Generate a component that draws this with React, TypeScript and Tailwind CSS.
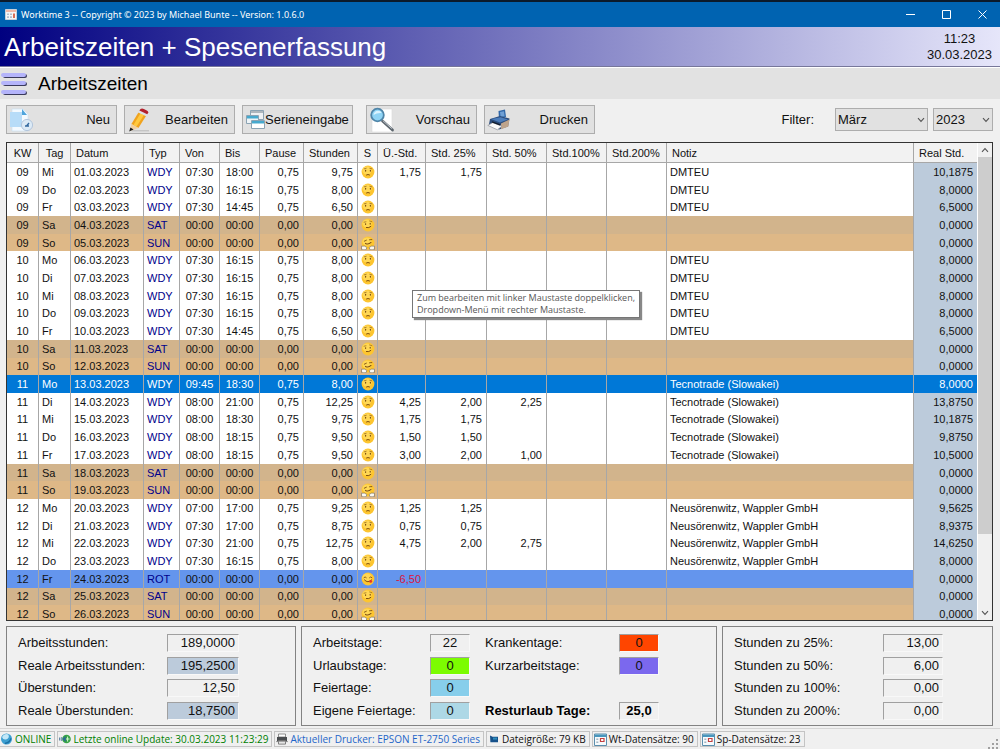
import React from "react";

interface Entry {
  kw: string;
  tag: string;
  datum: string;
  typ: "WDY" | "SAT" | "SUN" | "ROT";
  von: string;
  bis: string;
  pause: string;
  stunden: string;
  ueber?: string;
  std25?: string;
  std50?: string;
  notiz?: string;
  real: string;
  selected?: boolean;
}

const work = (
  kw: string,
  tag: string,
  day: string,
  von: string,
  bis: string,
  stunden: string,
  real: string,
  notiz: string,
  extra: Partial<Entry> = {}
): Entry => ({ kw, tag, datum: `${day}.03.2023`, typ: "WDY", von, bis, pause: "0,75", stunden, real, notiz, ...extra });

const free = (kw: string, tag: string, day: string, typ: Entry["typ"], extra: Partial<Entry> = {}): Entry => ({
  kw,
  tag,
  datum: `${day}.03.2023`,
  typ,
  von: "00:00",
  bis: "00:00",
  pause: "0,00",
  stunden: "0,00",
  real: "0,0000",
  ...extra,
});

const TEC = "Tecnotrade (Slowakei)";
const NEU = "Neusörenwitz, Wappler GmbH";

const entries: Entry[] = [
  work("09", "Mi", "01", "07:30", "18:00", "9,75", "10,1875", "DMTEU", { ueber: "1,75", std25: "1,75" }),
  work("09", "Do", "02", "07:30", "16:15", "8,00", "8,0000", "DMTEU"),
  work("09", "Fr", "03", "07:30", "14:45", "6,50", "6,5000", "DMTEU"),
  free("09", "Sa", "04", "SAT"),
  free("09", "So", "05", "SUN"),
  work("10", "Mo", "06", "07:30", "16:15", "8,00", "8,0000", "DMTEU"),
  work("10", "Di", "07", "07:30", "16:15", "8,00", "8,0000", "DMTEU"),
  work("10", "Mi", "08", "07:30", "16:15", "8,00", "8,0000", "DMTEU"),
  work("10", "Do", "09", "07:30", "16:15", "8,00", "8,0000", "DMTEU"),
  work("10", "Fr", "10", "07:30", "14:45", "6,50", "6,5000", "DMTEU"),
  free("10", "Sa", "11", "SAT"),
  free("10", "So", "12", "SUN"),
  work("11", "Mo", "13", "09:45", "18:30", "8,00", "8,0000", TEC, { selected: true }),
  work("11", "Di", "14", "08:00", "21:00", "12,25", "13,8750", TEC, { ueber: "4,25", std25: "2,00", std50: "2,25" }),
  work("11", "Mi", "15", "08:00", "18:30", "9,75", "10,1875", TEC, { ueber: "1,75", std25: "1,75" }),
  work("11", "Do", "16", "08:00", "18:15", "9,50", "9,8750", TEC, { ueber: "1,50", std25: "1,50" }),
  work("11", "Fr", "17", "08:00", "18:15", "9,50", "10,5000", TEC, { ueber: "3,00", std25: "2,00", std50: "1,00" }),
  free("11", "Sa", "18", "SAT"),
  free("11", "So", "19", "SUN"),
  work("12", "Mo", "20", "07:00", "17:00", "9,25", "9,5625", NEU, { ueber: "1,25", std25: "1,25" }),
  work("12", "Di", "21", "07:30", "17:00", "8,75", "8,9375", NEU, { ueber: "0,75", std25: "0,75" }),
  work("12", "Mi", "22", "07:30", "21:00", "12,75", "14,6250", NEU, { ueber: "4,75", std25: "2,00", std50: "2,75" }),
  work("12", "Do", "23", "07:30", "16:15", "8,00", "8,0000", NEU),
  free("12", "Fr", "24", "ROT", { ueber: "-6,50" }),
  free("12", "Sa", "25", "SAT"),
  free("12", "So", "26", "SUN"),
];

const rowColors = {
  WDY: "bg-white",
  SAT: "bg-[#d2b48c]",
  SUN: "bg-[#deb887]",
  ROT: "bg-[#6495ed]",
};

const columns = [
  { label: "KW", width: "w-8", align: "text-center" },
  { label: "Tag", width: "w-8", align: "text-center" },
  { label: "Datum", width: "w-[73px]", align: "text-left" },
  { label: "Typ", width: "w-9", align: "text-left" },
  { label: "Von", width: "w-10", align: "text-left" },
  { label: "Bis", width: "w-10", align: "text-left" },
  { label: "Pause", width: "w-11", align: "text-left" },
  { label: "Stunden", width: "w-[54px]", align: "text-left" },
  { label: "S", width: "w-5", align: "text-center" },
  { label: "Ü.-Std.", width: "w-12", align: "text-left" },
  { label: "Std. 25%", width: "w-[61px]", align: "text-left" },
  { label: "Std. 50%", width: "w-[60px]", align: "text-left" },
  { label: "Std.100%", width: "w-[60px]", align: "text-left" },
  { label: "Std.200%", width: "w-[60px]", align: "text-left" },
  { label: "Notiz", width: "", align: "text-left" },
  { label: "Real Std.", width: "w-[63px]", align: "text-left" },
];

const Face = ({ typ }: { typ: Entry["typ"] }) => (
  <svg viewBox="0 0 14 14" className="mx-auto block size-[14px]" aria-hidden="true">
    <circle cx="7" cy="7" r="6.4" fill="#fdc52f" />
    <ellipse cx="6" cy="5.4" rx="4.6" ry="4" fill="#ffd754" />
    {typ === "WDY" && (
      <g stroke="#7d4f12" strokeLinecap="round" fill="none">
        <path d="M3.2 3.8 5.2 3.3M8.8 3.3 10.8 3.8" strokeWidth=".6" />
        <path d="M4.6 5.3v.8M9.4 5.3v.8" strokeWidth="1.2" />
        <path d="M5.5 9.9Q7 8.9 8.5 9.9" strokeWidth="1" />
      </g>
    )}
    {typ === "SAT" && (
      <g stroke="#7d4f12" strokeLinecap="round" fill="none">
        <path d="M3 4.2 5 3.8M8.6 3 10.8 3.7" strokeWidth=".6" />
        <path d="M4.6 5.8v.5M9.2 5.4v.7" strokeWidth="1.2" />
        <path d="M5.4 9.6Q8 10.2 9.8 8.5" strokeWidth="1" />
      </g>
    )}
    {typ === "SUN" && (
      <g strokeLinecap="round" fill="none">
        <path d="M3.3 5.2 5.4 4.2M8.5 3.8 10.8 3.6" stroke="#7d4f12" strokeWidth=".9" />
        <path d="M4.5 7.4Q7.5 9 10 6.4" stroke="#7d4f12" strokeWidth="1.1" />
        <path d="M.6 10.2Q4 9.2 6 11.6L4.8 13.8H1.2ZM13.4 10.2Q10 9.2 8 11.6L9.2 13.8H12.8Z" fill="#fbf8f1" stroke="#6f685c" strokeWidth=".6" />
      </g>
    )}
    {typ === "ROT" && (
      <g strokeLinecap="round" fill="none">
        <path d="M2.9 5.6Q4.1 4 5.3 5.6M8.5 5.6Q9.7 4 10.9 5.6" stroke="#7d4f12" strokeWidth=".9" />
        <path d="M3.4 7.9Q7 11.8 10.4 7.9" stroke="#7d4f12" strokeWidth="1" />
        <ellipse cx="9.7" cy="9.4" rx="1.5" ry="1.3" fill="#e5322d" />
      </g>
    )}
  </svg>
);

const NewIcon = () => (
  <svg viewBox="0 0 24 24" className="size-6 shrink-0" aria-hidden="true">
    <path d="M3 1h11l5 5v17H3Z" fill="#f4faff" stroke="#c8dff2" strokeWidth=".6" />
    <path d="M1 4h12v15H1Z" fill="#b7dcf8" />
    <path d="M13 1v6h5Z" fill="#4ea4dc" />
    <circle cx="18" cy="17" r="5.6" fill="#dceaf6" stroke="#b3c6dc" />
    <path d="M16 18h4M17.5 18l2.5-3" stroke="#356aa0" strokeWidth="1.4" />
  </svg>
);

const PencilIcon = () => (
  <svg viewBox="0 0 24 24" className="size-6 shrink-0" aria-hidden="true">
    <path d="M5 22.8h17" stroke="#b9b9b9" />
    <path d="M11.4 4.4 19 8 11.4 20 4.4 16Z" fill="#f0a31f" />
    <path d="M13.4 5.4 17 7 9.4 18.8 6.3 17.2Z" fill="#ffc93f" />
    <path d="M4.4 16 11.4 20 3 23Z" fill="#f0cfa0" />
    <path d="m3.4 19.4 3.1 2-4.3 2Z" fill="#1c1c1c" />
    <path d="m11.4 4.4 1-2 7.8 3.8L19 8Z" fill="#dde1e4" />
    <path d="M12.4 2.4Q13.6-.2 16.8.9l3 1.5Q22.4 3.8 20.2 6.2Z" fill="#b3212c" />
  </svg>
);

const SeriesIcon = () => (
  <svg viewBox="0 0 20 21" className="h-[21px] w-5 shrink-0" aria-hidden="true">
    <g stroke="#8ba3b3">
      <path d="M5.5 1.5h13v9h-13Z" fill="#eef1f3" />
      <path d="M1.5 6.5h12v8h-12Z" fill="#eef4f7" />
      <path d="M6.5 11.5h13v8h-13Z" fill="#fff" />
    </g>
    <path d="M6 2h12v2H6Z" fill="#aeb6bc" />
    <path d="M2 7h11v2.4H2ZM7 12h12v2.6H7Z" fill="#46a9ce" />
  </svg>
);

const PreviewIcon = () => (
  <svg viewBox="0 0 26 26" className="size-[26px] shrink-0" aria-hidden="true">
    <path d="M3 2h20v23H3Z" fill="#fff" stroke="#d9d9d9" strokeWidth=".6" />
    <path d="m13.5 14 10 9" stroke="#5d666e" strokeWidth="2.8" strokeLinecap="round" />
    <path d="m13.8 13.6 9 8" stroke="#c3cad0" />
    <circle cx="8.5" cy="8" r="6.3" fill="#8fd4f5" stroke="#4f85a8" strokeWidth="1.8" />
    <path d="M4.5 8Q5 4 9 3.8q3 0 3.6 2.2Q8 5.6 4.5 8Z" fill="#d9f3ff" />
  </svg>
);

const PrinterIcon = () => (
  <svg viewBox="0 0 24 22" className="h-[22px] w-6 shrink-0" aria-hidden="true">
    <path d="m11.5 2 6.5-1.4L19 8l-7 2Z" fill="#2f66a8" />
    <path d="m13 3 4-.8.6 5-4 .8Z" fill="#6f9fd4" />
    <path d="M3 10 13 7l9.5 2.5-1.5 8-9 3-10-5Z" fill="#2b4c7c" />
    <path d="m4 10 9.5-1.8L21 10.4l-8 3Z" fill="#4c7dbb" />
    <path d="m14 14.4 8.4-4-1 7-7.4 2.8Z" fill="#bfa48b" />
    <path d="m.8 16.4 5-2.8 9.2 3.6-4.6 3.6Z" fill="#fafafa" stroke="#8c9199" strokeWidth=".7" />
    <path d="m5 12.8 8 3" stroke="#111c2c" strokeWidth="1.4" />
  </svg>
);

const AppIcon = () => (
  <svg viewBox="0 0 12 11" className="h-[11px] w-3" aria-hidden="true">
    <path d="M.5.5h11v10H.5Z" fill="#f5f6f8" stroke="#c7cfd9" />
    <path d="M1 1h10v2H1Z" fill="#f0b7a7" />
    <path d="M2 4.5h2v1.6H2ZM5 4.5h2v1.6H5ZM2 7.3h2V9H2ZM5 7.3h2V9H5Z" fill="#b3bfce" />
    <path d="M8 4.5h2V9H8Z" fill="#d96d55" />
  </svg>
);

const GlobeIcon = () => (
  <svg viewBox="0 0 12 12" className="size-3 shrink-0" aria-hidden="true">
    <circle cx="5.5" cy="6" r="5.5" fill="#3d9fd0" />
    <path d="M1 4Q3 0 7.4 1.4 9 5 5 6.4 2 7 1 4Z" fill="#c3e8f8" />
    <path d="M4 10.5Q9.5 9 9.8 5.4" stroke="#1c6fa5" fill="none" strokeWidth="1.3" />
  </svg>
);

const UpdateIcon = () => (
  <svg viewBox="0 0 12 12" className="size-3 shrink-0" aria-hidden="true">
    <circle cx="7.5" cy="6" r="4.3" fill="#36a445" />
    <path d="M7 6h3.5M8.6 3.6v5" stroke="#d3f4cf" />
    <path d="M0 4.5h1.4v3H0ZM2.2 4h1v4h-1Z" fill="#6689a8" />
    <path d="m3.4 6 3.2-3v6Z" fill="#2b6899" />
  </svg>
);

const SmallPrinterIcon = () => (
  <svg viewBox="0 0 12 12" className="size-3 shrink-0" aria-hidden="true">
    <path d="M2.5 1h7v3h-7Z" fill="#fff" stroke="#777" strokeWidth=".8" />
    <path d="M1 4h10v4.6H1Z" fill="#4a4d50" />
    <path d="M2.5 7.5h7v3.6h-7Z" fill="#ededed" stroke="#666" strokeWidth=".8" />
    <path d="M0 8.6h12" stroke="#888" strokeWidth=".8" />
  </svg>
);

const DiskIcon = () => (
  <svg viewBox="0 0 12 12" className="size-3 shrink-0" aria-hidden="true">
    <path d="m2 2.5 2.6 1.3H10v5.4H2.4Z" fill="#16518a" />
    <path d="M5 4.6h4v2H5Z" fill="#2f8dbd" />
  </svg>
);

const RecordIcon = () => (
  <svg viewBox="0 0 13 13" className="size-[13px] shrink-0" aria-hidden="true">
    <path d="M.5 1h12v11.5H.5Z" fill="#f6fafc" stroke="#5b8fae" />
    <path d="M1 1.5h11V4H1Z" fill="#4896bd" />
    <path d="M2.3 5.5h2v1.6h-2ZM2.3 8.5h2v1.6h-2Z" fill="#a3b6c4" />
    <path d="M6.5 5.5H10v3H6.5Z" fill="#fff" stroke="#c33f3f" strokeWidth="1.2" />
  </svg>
);

const Chevron = ({ up = false }: { up?: boolean }) => (
  <svg viewBox="0 0 8 6" className="h-[6px] w-2" fill="none" stroke="#555" strokeWidth="1.1" aria-hidden="true">
    <path d={up ? "M1 4.8 4 1.6 7 4.8" : "M1 1.2 4 4.4 7 1.2"} />
  </svg>
);

const ToolButton = ({ label, icon, className = "" }: { label: string; icon: React.ReactNode; className?: string }) => (
  <button
    type="button"
    className={`flex h-[29px] w-[111px] shrink-0 items-center justify-between border border-[#adadad] bg-[#e1e1e1] pl-[2px] pr-[6px] ${className}`}
  >
    {icon}
    {label}
  </button>
);

const FilterSelect = ({ label, value, className }: { label: string; value: string; className: string }) => (
  <div className={`relative ${className}`}>
    <select
      aria-label={label}
      defaultValue={value}
      className="h-[23px] w-full appearance-none border border-[#adadad] bg-[#e1e1e1] pl-[2px] leading-5"
    >
      <option>{value}</option>
    </select>
    <span className="pointer-events-none absolute right-[3px] top-[9px]">
      <Chevron />
    </span>
  </div>
);

interface StatProps {
  id: string;
  label: string;
  value: string;
  box?: string;
  labelClass?: string;
}

const Stat = ({ id, label, value, box = "text-right", labelClass = "" }: StatProps) => (
  <>
    <label htmlFor={id} className={`whitespace-nowrap leading-[18px] ${labelClass}`}>
      {label}
    </label>
    <output
      id={id}
      className={`block h-[18px] border border-b-[#f8f8f8] border-l-[#a0a0a0] border-r-[#f8f8f8] border-t-[#a0a0a0] px-[3px] leading-4 ${box}`}
    >
      {value}
    </output>
  </>
);

const StatusItem = ({ icon, text, className = "" }: { icon: React.ReactNode; text: string; className?: string }) => (
  <div className={`flex h-4 items-center gap-[2px] whitespace-nowrap border border-[#c4c4c4] pl-px pr-[3px] ${className}`}>
    {icon}
    {text}
  </div>
);

const EntryRow = ({ entry }: { entry: Entry }) => {
  const cell = "border-r border-[#a7a7a7] p-0 whitespace-nowrap";
  const num = `${cell} pr-1 text-right`;
  const typColor = entry.selected ? "" : "text-[#00008b]";
  return (
    <tr className={entry.selected ? "bg-[#0078d7] text-white" : rowColors[entry.typ]}>
      <td className={`${cell} text-center`}>{entry.kw}</td>
      <td className={`${cell} pl-[3px]`}>{entry.tag}</td>
      <td className={`${cell} pl-[3px]`}>{entry.datum}</td>
      <td className={`${cell} pl-[3px] ${typColor}`}>{entry.typ}</td>
      <td className={`${cell} text-center`}>{entry.von}</td>
      <td className={`${cell} text-center`}>{entry.bis}</td>
      <td className={num}>{entry.pause}</td>
      <td className={num}>{entry.stunden}</td>
      <td className={cell}>
        <Face typ={entry.typ} />
      </td>
      <td className={`${num} ${entry.ueber?.startsWith("-") ? "text-[#dc143c]" : ""}`}>{entry.ueber}</td>
      <td className={num}>{entry.std25}</td>
      <td className={num}>{entry.std50}</td>
      <td className={num} />
      <td className={num} />
      <td className={`${cell} pl-[3px]`}>{entry.notiz}</td>
      <td className={`p-0 pr-1 text-right ${entry.selected ? "" : "bg-[#bccbdb]"}`}>{entry.real}</td>
    </tr>
  );
};

const App: React.FC = () => (
  <div className="flex h-screen flex-col overflow-hidden bg-[#f0f0f0] font-['Liberation_Sans',Arial,sans-serif] text-[13px] text-[#111]">
    <header className="flex h-[27px] shrink-0 items-center border-t-2 border-[#0b1a2b] bg-[#0063b1] pl-[5px] font-['Noto_Sans',sans-serif] text-[9px] text-white">
      <AppIcon />
      <span className="ml-1 flex-1">Worktime 3 -- Copyright © 2023 by Michael Bunte -- Version: 1.0.6.0</span>
      <button type="button" aria-label="Minimieren" className="flex w-9 justify-center">
        <svg viewBox="0 0 9 9" className="size-[9px]" stroke="#fff">
          <path d="M0 4.5h9" />
        </svg>
      </button>
      <button type="button" aria-label="Maximieren" className="flex w-9 justify-center">
        <svg viewBox="0 0 9 9" className="size-[9px]" stroke="#fff" fill="none">
          <path d="M.5.5h8v8h-8Z" />
        </svg>
      </button>
      <button type="button" aria-label="Schließen" className="flex w-9 justify-center">
        <svg viewBox="0 0 9 9" className="size-[9px]" stroke="#fff">
          <path d="m.5.5 8 8M8.5.5l-8 8" />
        </svg>
      </button>
    </header>

    <div className="flex h-10 shrink-0 items-center justify-between border-b border-[#77779a] bg-linear-to-r/srgb from-[#000080] to-[#e6e6fa] pl-1 pr-2">
      <h1 className="text-[26px] leading-8 text-white">Arbeitszeiten + Spesenerfassung</h1>
      <div className="text-center leading-4">
        <div>11:23</div>
        <div>30.03.2023</div>
      </div>
    </div>

    <div className="flex h-8 shrink-0 items-center gap-[11px] border-t border-white bg-[#e2e2e2]">
      <button type="button" aria-label="Menü">
        <svg viewBox="0 0 27 24" className="h-6 w-[27px]">
          {[1, 9, 18].map((y) => (
            <g key={y}>
              <rect x="3" y={y + 1} width="24" height="4" rx="2" fill="#3a3a5c" />
              <rect x="1" y={y} width="25" height="4" rx="2" fill="#b4b4fa" />
            </g>
          ))}
        </svg>
      </button>
      <h2 className="text-[19px] leading-6 text-black">Arbeitszeiten</h2>
    </div>

    <div className="flex h-[43px] shrink-0 items-center gap-[7px] pb-[2px] pl-[6px] pr-[7px]">
      <ToolButton label="Neu" icon={<NewIcon />} />
      <ToolButton label="Bearbeiten" icon={<PencilIcon />} />
      <ToolButton label="Serieneingabe" icon={<SeriesIcon />} />
      <ToolButton label="Vorschau" icon={<PreviewIcon />} className="ml-[6px]" />
      <ToolButton label="Drucken" icon={<PrinterIcon />} />
      <div className="ml-auto flex items-center gap-[5px]">
        <span className="mr-4">Filter:</span>
        <FilterSelect label="Monat" value="März" className="w-[93px]" />
        <FilterSelect label="Jahr" value="2023" className="w-[60px]" />
      </div>
    </div>

    <main className="relative ml-[6px] mr-[7px] flex min-h-0 flex-1 border border-[#333] bg-white">
      <div className="min-w-0 flex-1 overflow-hidden">
        <table className="h-[480px] w-full table-fixed border-separate border-spacing-0 text-[11px] leading-3">
          <thead>
            <tr className="h-5 bg-[#f2f2f2]">
              {columns.map((col) => (
                <th
                  key={col.label}
                  scope="col"
                  className={`whitespace-nowrap border-b border-r border-[#a7a7a7] p-0 font-normal last:border-r-0 ${col.width} ${col.align} ${
                    col.align === "text-left" ? "pl-[5px]" : ""
                  }`}
                >
                  {col.label}
                </th>
              ))}
            </tr>
          </thead>
          <tbody>
            {entries.map((entry) => (
              <EntryRow key={entry.datum} entry={entry} />
            ))}
          </tbody>
        </table>
      </div>

      <div className="flex w-[15px] flex-col border-l border-white bg-[#f0f0f0]">
        <button type="button" aria-label="Nach oben" className="flex h-[14px] items-center justify-center">
          <Chevron up />
        </button>
        <div className="flex-1">
          <div className="h-[84%] bg-[#cdcdcd]" />
        </div>
        <button type="button" aria-label="Nach unten" className="flex h-[14px] items-center justify-center">
          <Chevron />
        </button>
      </div>

      <div
        role="tooltip"
        className="absolute left-[405px] top-[147px] whitespace-nowrap border border-[#767676] bg-white px-1 py-px font-['Open_Sans',sans-serif] text-[9px] leading-3 text-[#575757] shadow-[2px_2px_1px_#888]"
      >
        Zum bearbeiten mit linker Maustaste doppelklicken,
        <br />
        Dropdown-Menü mit rechter Maustaste.
      </div>
    </main>

    <div className="mt-[5px] grid h-[100px] shrink-0 grid-cols-[290fr_416fr_271fr] gap-[5px] pl-[6px] pr-[7px]">
      <section className="grid grid-cols-[149px_72px] content-between border border-[#828282] pb-[5px] pl-[11px] pt-[7px]">
        <Stat id="arbeitsstunden" label="Arbeitsstunden:" value="189,0000" />
        <Stat id="real-arbeitsstunden" label="Reale Arbeitsstunden:" value="195,2500" box="bg-[#bccbdb] text-right" />
        <Stat id="ueberstunden" label="Überstunden:" value="12,50" />
        <Stat id="real-ueberstunden" label="Reale Überstunden:" value="18,7500" box="bg-[#bccbdb] text-right" />
      </section>

      <section className="grid grid-cols-[117px_40px_15px_134px_40px] content-between border border-[#828282] pb-[5px] pl-[11px] pt-[7px]">
        <Stat id="arbeitstage" label="Arbeitstage:" value="22" box="text-center" />
        <span />
        <Stat id="krankentage" label="Krankentage:" value="0" box="bg-[#ff4500] text-center" />
        <Stat id="urlaubstage" label="Urlaubstage:" value="0" box="bg-[#7cfc00] text-center" />
        <span />
        <Stat id="kurzarbeitstage" label="Kurzarbeitstage:" value="0" box="bg-[#7b68ee] text-center" />
        <Stat id="feiertage" label="Feiertage:" value="0" box="bg-[#87ceeb] text-center" />
        <span className="col-span-3" />
        <Stat id="eigene-feiertage" label="Eigene Feiertage:" value="0" box="bg-[#add8e6] text-center" />
        <span />
        <Stat id="resturlaub" label="Resturlaub Tage:" value="25,0" box="text-center font-bold text-black" labelClass="font-bold text-black" />
      </section>

      <section className="grid grid-cols-[149px_60px] content-between border border-[#828282] pb-[5px] pl-[11px] pt-[7px]">
        <Stat id="std-25" label="Stunden zu 25%:" value="13,00" />
        <Stat id="std-50" label="Stunden zu 50%:" value="6,00" />
        <Stat id="std-100" label="Stunden zu 100%:" value="0,00" />
        <Stat id="std-200" label="Stunden zu 200%:" value="0,00" />
      </section>
    </div>

    <footer className="mt-[2px] flex h-[21px] shrink-0 items-center gap-[2px] border-t border-[#d5d5d5] font-['Open_Sans',sans-serif] text-[10px] leading-3">
      <StatusItem icon={<GlobeIcon />} text="ONLINE" className="border-l-0 pl-0 text-[#008000]" />
      <StatusItem icon={<UpdateIcon />} text="Letzte online Update: 30.03.2023 11:23:29" className="text-[#008000]" />
      <StatusItem icon={<SmallPrinterIcon />} text="Aktueller Drucker: EPSON ET-2750 Series" className="text-[#1f66c8]" />
      <StatusItem icon={<DiskIcon />} text="Dateigröße: 79 KB" />
      <StatusItem icon={<RecordIcon />} text="Wt-Datensätze: 90" />
      <StatusItem icon={<RecordIcon />} text="Sp-Datensätze: 23" />
      <svg viewBox="0 0 10 10" className="ml-auto mr-[2px] size-[10px] self-end" fill="#a0a0a0" aria-hidden="true">
        <path d="M8 0h2v2H8ZM4 4h2v2H4ZM8 4h2v2H8ZM0 8h2v2H0ZM4 8h2v2H4ZM8 8h2v2H8Z" />
      </svg>
    </footer>
  </div>
);

export default App;
